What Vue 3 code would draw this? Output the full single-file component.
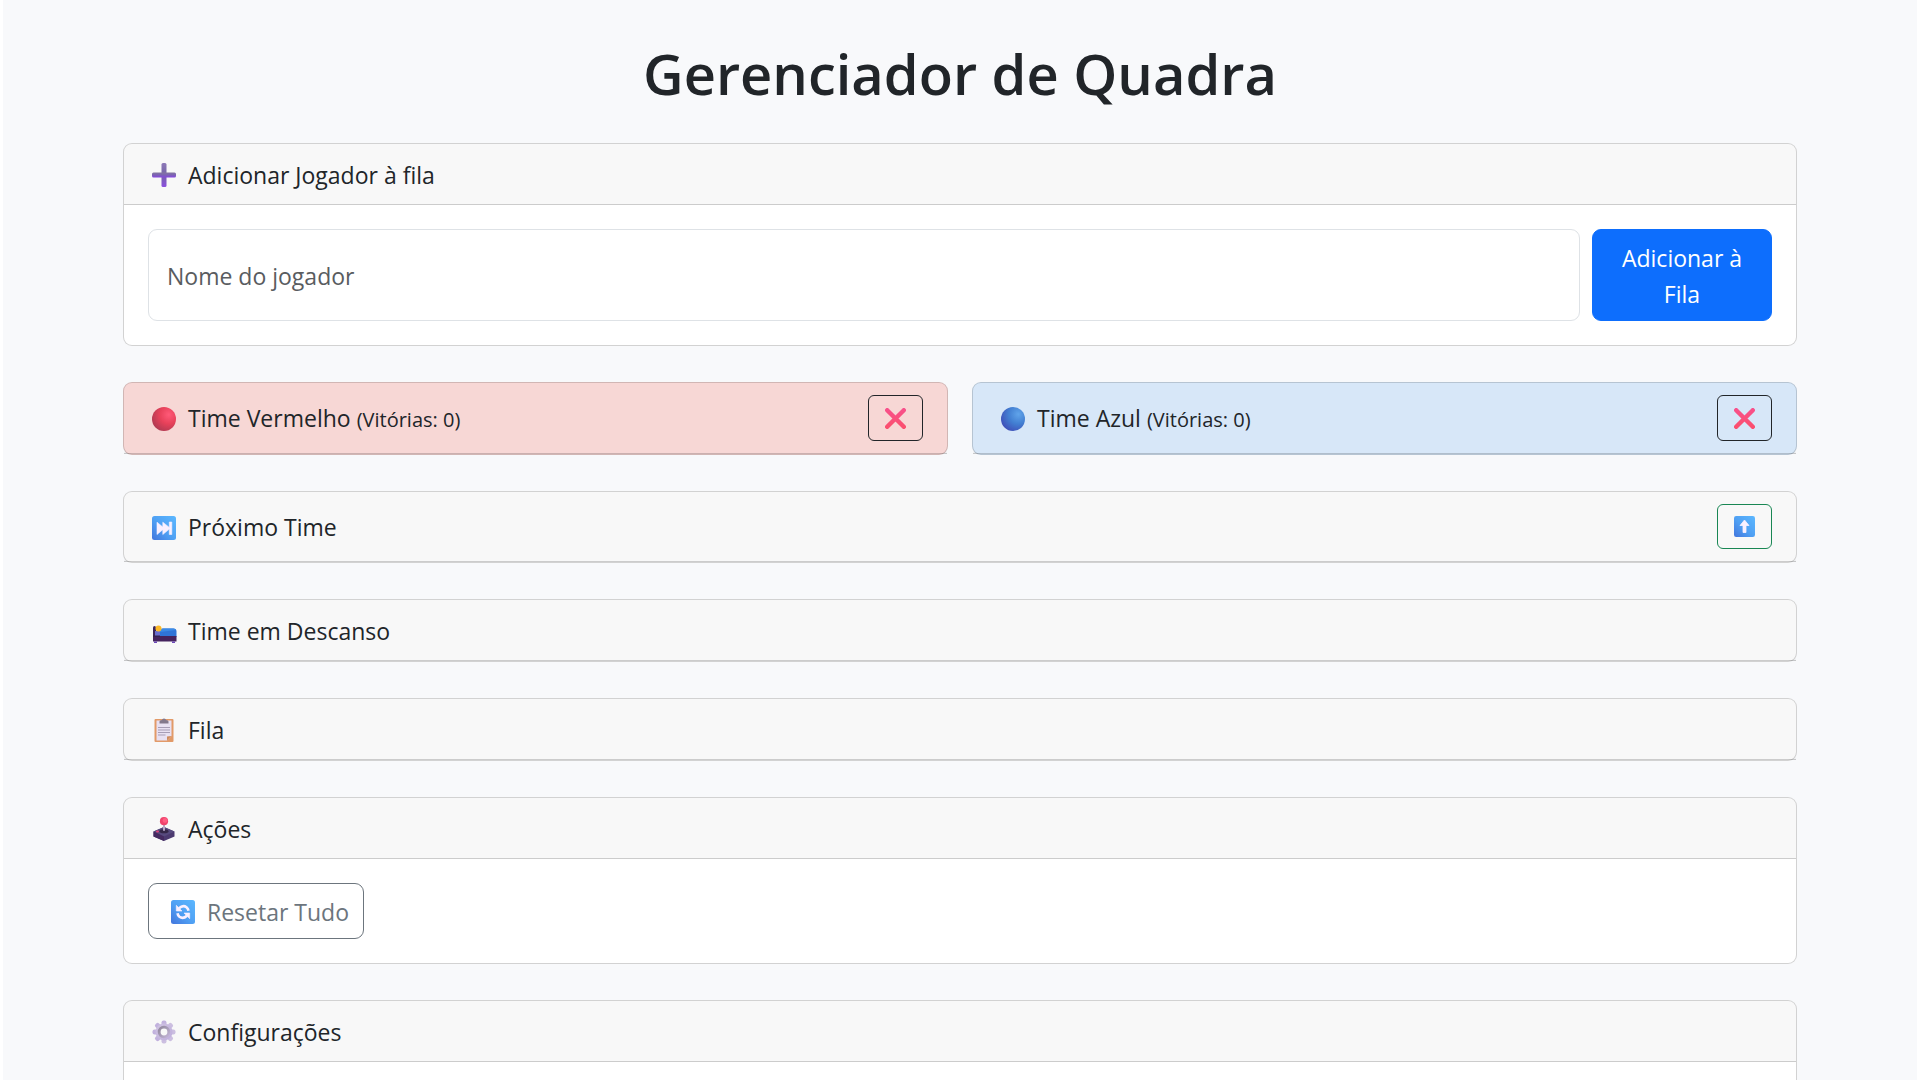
<script setup>
import { ref } from 'vue'

const playerName = ref('')
const teams = ref([
  { id: 'red', name: 'Time Vermelho', wins: 0 },
  { id: 'blue', name: 'Time Azul', wins: 0 },
])
const queue = ref([])

function addPlayer() {
  const name = playerName.value.trim()
  if (!name) return
  queue.value.push(name)
  playerName.value = ''
}

function resetAll() {
  queue.value = []
  teams.value.forEach((team) => { team.wins = 0 })
}
</script>

<template>
  <main class="page">
    <h1 class="title">Gerenciador de Quadra</h1>

    <section class="card">
      <h2 class="card-header">
        <svg class="icon" viewBox="0 0 24 24" aria-hidden="true">
          <defs>
            <linearGradient id="plusV" x1="0" y1="0" x2="0" y2="1">
              <stop offset="0" stop-color="#8d78b8" />
              <stop offset=".5" stop-color="#7464a6" />
              <stop offset="1" stop-color="#8c4fe0" />
            </linearGradient>
            <linearGradient id="plusH" x1="0" y1="0" x2="0" y2="1">
              <stop offset="0" stop-color="#83779f" />
              <stop offset=".5" stop-color="#7c62b4" />
              <stop offset="1" stop-color="#8646e0" />
            </linearGradient>
          </defs>
          <rect x="9.5" y="0" width="5" height="24" rx="1.5" fill="url(#plusV)" />
          <rect x="0" y="9.5" width="24" height="5" rx="1.5" fill="url(#plusH)" />
        </svg>
        <span>Adicionar Jogador à fila</span>
      </h2>
      <form class="card-body add-form" @submit.prevent="addPlayer">
        <input v-model="playerName" class="field" type="text" placeholder="Nome do jogador" aria-label="Nome do jogador" />
        <button class="btn btn-primary" type="submit">Adicionar à Fila</button>
      </form>
    </section>

    <div class="teams">
      <section v-for="team in teams" :key="team.id" class="card" :class="team.id">
        <div class="card-header with-action">
          <svg class="icon" viewBox="0 0 24 24" aria-hidden="true">
            <defs>
              <radialGradient id="ball-red" cx=".7" cy=".32" r=".75">
                <stop offset="0" stop-color="#ff5a78" />
                <stop offset=".5" stop-color="#e8415a" />
                <stop offset="1" stop-color="#b23a52" />
              </radialGradient>
              <radialGradient id="ball-blue" cx=".72" cy=".3" r=".8">
                <stop offset="0" stop-color="#60a4ea" />
                <stop offset=".5" stop-color="#427fd2" />
                <stop offset="1" stop-color="#3f4fb8" />
              </radialGradient>
            </defs>
            <circle cx="12" cy="12" r="12" :fill="`url(#ball-${team.id})`" />
          </svg>
          <h2 class="label">{{ team.name }} <small>(Vitórias: {{ team.wins }})</small></h2>
          <button class="btn-icon dark" type="button" :aria-label="`Derrota do ${team.name}`">
            <svg viewBox="0 0 21 21" aria-hidden="true">
              <defs>
                <linearGradient id="cross" gradientUnits="userSpaceOnUse" x1="0" y1="0" x2="0" y2="21">
                  <stop offset="0" stop-color="#f8508c" />
                  <stop offset="1" stop-color="#fb4f6c" />
                </linearGradient>
              </defs>
              <path d="M2.2 2.2 18.8 18.8M18.8 2.2 2.2 18.8" fill="none" stroke="url(#cross)" stroke-width="4.4" stroke-linecap="round" />
            </svg>
          </button>
        </div>
      </section>
    </div>

    <section class="card">
      <div class="card-header with-action next">
        <svg class="icon" viewBox="0 0 24 24" aria-hidden="true">
          <defs>
            <linearGradient id="tile" x1="1" y1="0" x2="0" y2="1">
              <stop offset="0" stop-color="#5cb8ff" />
              <stop offset=".55" stop-color="#4f9ff3" />
              <stop offset="1" stop-color="#4275dc" />
            </linearGradient>
          </defs>
          <rect width="24" height="24" rx="2.5" fill="url(#tile)" />
          <path d="M5 6.2 10.8 11V6.2L17.3 11.4V6h2.5v12.5h-2.5v-5.4L10.8 18.5V13.7L5 18.5Z" fill="#faf0ff" stroke="#faf0ff" stroke-width=".6" stroke-linejoin="round" />
        </svg>
        <h2 class="label">Próximo Time</h2>
        <button class="btn-icon green" type="button" aria-label="Subir próximo time">
          <svg viewBox="0 0 21 21" aria-hidden="true">
            <rect width="21" height="21" rx="2.2" fill="url(#tile)" />
            <path d="M10.5 4 15 9.5H12V16.5H9V9.5H6Z" fill="#faf0ff" stroke="#faf0ff" stroke-width=".8" stroke-linejoin="round" />
          </svg>
        </button>
      </div>
    </section>

    <section class="card">
      <h2 class="card-header">
        <svg class="icon" viewBox="0 0 24 24" aria-hidden="true">
          <path d="M1 8.5Q1 7 2.5 7T4 8.5V17H1Z" fill="#3c2658" />
          <rect x="3" y="12" width="6" height="6" fill="#6a6fd0" />
          <path d="M8 17V12.5Q8 9.5 11 9.5H21.5Q24.5 9.5 24.5 12.5V18H8Z" fill="#2f74d8" />
          <path d="M8 13Q8 9.5 11 9.5H21.5Q23.5 9.5 24 11Z" fill="#3b8ae6" />
          <circle cx="6.5" cy="9.5" r="3" fill="#fcb827" />
          <path d="M1 17H24.5V22.5H1Z" fill="#45235e" />
          <path d="M1 16.5H8V18H1Z" fill="#352150" />
          <path d="M2 22.5H5V24H2ZM20 22.5H23V24H20Z" fill="#6b46b8" />
        </svg>
        <span>Time em Descanso</span>
      </h2>
    </section>

    <section class="card">
      <h2 class="card-header">
        <svg class="icon" viewBox="0 0 24 24" aria-hidden="true">
          <rect x="2.5" y="1" width="19" height="23" rx="1" fill="#e29a68" />
          <path d="M4.5 2.5H19.5V18L15 22.5H4.5Z" fill="#e8e0f2" />
          <path d="M19.5 18 15 22.5V18.5Z" fill="#cf8a5c" />
          <path d="M7.5 5.5V3.5Q7.5 2 10 2 10 .5 12 .5T14 2Q16.5 2 16.5 3.5V5.5Z" fill="#83788c" />
          <path d="M6 9.5H18M6 12H18M6 14.5H18M6 17H13.5" stroke="#a79db6" stroke-width="1" />
        </svg>
        <span>Fila</span>
      </h2>
    </section>

    <section class="card">
      <h2 class="card-header">
        <svg class="icon" viewBox="0 0 24 24" aria-hidden="true">
          <path d="M1.5 14.5 12 10 22.5 14.5V19.5L12 24 1.5 19.5Z" fill="#4c3a70" />
          <path d="M1.5 14.5 12 10 22.5 14.5 12 19.5Z" fill="#574a7e" />
          <path d="M1.5 14.5 12 19.5V24L1.5 19.5Z" fill="#452a60" />
          <ellipse cx="12" cy="14.2" rx="4.5" ry="2" fill="#342748" />
          <rect x="11" y="7" width="2" height="7" rx="1" fill="#b9a9c8" />
          <ellipse cx="5.5" cy="14.5" rx="1.5" ry=".9" fill="#e2417a" />
          <circle cx="12" cy="4.2" r="4.1" fill="#f0436c" />
          <circle cx="13" cy="3.4" r="2.4" fill="#ff5c82" />
        </svg>
        <span>Ações</span>
      </h2>
      <div class="card-body">
        <button class="btn btn-outline" type="button" @click="resetAll">
          <svg class="icon" viewBox="0 0 24 24" aria-hidden="true">
            <rect width="24" height="24" rx="2.5" fill="url(#tile)" />
            <path d="M8 8.3Q12 4.6 15.5 7.3 17.2 8.7 17.5 10.8" fill="none" stroke="#faf0ff" stroke-width="2.6" />
            <path d="M5.3 5.3V11H11Z" fill="#faf0ff" stroke="#faf0ff" stroke-width=".6" stroke-linejoin="round" />
            <path d="M16 15.7Q12 19.4 8.5 16.7 6.8 15.3 6.5 13.2" fill="none" stroke="#faf0ff" stroke-width="2.6" />
            <path d="M18.7 18.7V13H13Z" fill="#faf0ff" stroke="#faf0ff" stroke-width=".6" stroke-linejoin="round" />
          </svg>
          <span>Resetar Tudo</span>
        </button>
      </div>
    </section>

    <section class="card">
      <h2 class="card-header">
        <svg class="icon" viewBox="0 0 24 24" aria-hidden="true">
          <defs>
            <linearGradient id="gear" gradientUnits="userSpaceOnUse" x1="0" y1="0" x2="24" y2="24">
              <stop offset="0" stop-color="#d3c8e2" />
              <stop offset="1" stop-color="#bba9dc" />
            </linearGradient>
            <linearGradient id="hub" x1="0" y1="0" x2="1" y2="1">
              <stop offset="0" stop-color="#91889c" />
              <stop offset="1" stop-color="#c2b4d6" />
            </linearGradient>
          </defs>
          <g fill="url(#gear)">
            <rect v-for="n in 4" :key="n" x="9.5" y=".5" width="5" height="23" rx="2" :transform="`rotate(${n * 45} 12 12)`" />
            <circle cx="12" cy="12" r="8.5" />
          </g>
          <circle cx="12" cy="12" r="4.8" fill="#f8f8f8" stroke="url(#hub)" stroke-width="2.8" />
        </svg>
        <span>Configurações</span>
      </h2>
      <div class="card-body"></div>
    </section>
  </main>
</template>

<style>
body {
  background: #fff;
}
</style>

<style scoped>
* {
  box-sizing: border-box;
}

.page {
  display: flex;
  flex-direction: column;
  gap: 36px;
  height: 100vh;
  margin: 0 3px;
  padding: 35px 120px 36px;
  overflow-y: auto;
  scrollbar-width: none;
  background: #f8f9fb;
  color: #212529;
  font: 400 23px/36px "Open Sans", "Noto Sans", sans-serif;
}

.title {
  flex: none;
  margin: 0;
  padding-top: 4px;
  font-size: 56px;
  font-weight: 600;
  line-height: 68px;
  text-align: center;
}

.card {
  flex: none;
  border: 1px solid rgba(0, 0, 0, 0.175);
  border-radius: 9px;
  background: #fff;
}

.card.red {
  background: #fedddb;
}

.card.blue {
  background: #ddeeff;
}

.card-header {
  display: flex;
  align-items: center;
  gap: 12px;
  margin: 0;
  padding: 13px 24px 11px;
  border-bottom: 1px solid rgba(0, 0, 0, 0.175);
  border-radius: 8px 8px 0 0;
  background: rgba(33, 37, 41, 0.03);
  font-size: 23px;
  font-weight: 400;
}

.card-header.with-action {
  padding: 12px 24px;
}

.with-action .icon {
  margin-top: 2px;
}

.label {
  flex: 1;
  margin: 0;
  padding-top: 2px;
  font-size: 23px;
  font-weight: 400;
}

.next .label {
  padding-top: 0;
}

.label small {
  font-size: 20px;
}

.icon {
  flex: none;
  width: 24px;
  height: 24px;
  margin-left: 4px;
  overflow: visible;
}

.card-body {
  padding: 24px;
}

.add-form {
  display: flex;
  gap: 12px;
}

.field {
  flex: 1;
  min-width: 0;
  padding: 10px 18px 8px;
  border: 1px solid #dee2e6;
  border-radius: 9px;
  background: #fff;
  color: #212529;
  font: inherit;
}

.field::placeholder {
  color: #595c5f;
  opacity: 1;
}

.btn {
  padding: 10px 18px 8px;
  border: 1px solid;
  border-radius: 9px;
  font: inherit;
  cursor: pointer;
}

.btn-primary {
  width: 180px;
  border-color: #0d6efd;
  background: #0d6efd;
  color: #fff;
}

.btn-outline {
  display: flex;
  align-items: center;
  gap: 12px;
  padding-right: 14px;
  border-color: #6c757d;
  background: transparent;
  color: #6c757d;
}

.btn-icon {
  display: flex;
  align-items: center;
  justify-content: center;
  width: 55px;
  height: 46px;
  padding: 0;
  border: 1px solid;
  border-radius: 6px;
  background: transparent;
  cursor: pointer;
}

.next .btn-icon {
  height: 45px;
}

.btn-icon svg {
  width: 21px;
  height: 21px;
}

.dark {
  border-color: #212529;
}

.green {
  border-color: #198754;
}

.teams {
  display: grid;
  flex: none;
  grid-template-columns: 1fr 1fr;
  gap: 24px;
}
</style>
